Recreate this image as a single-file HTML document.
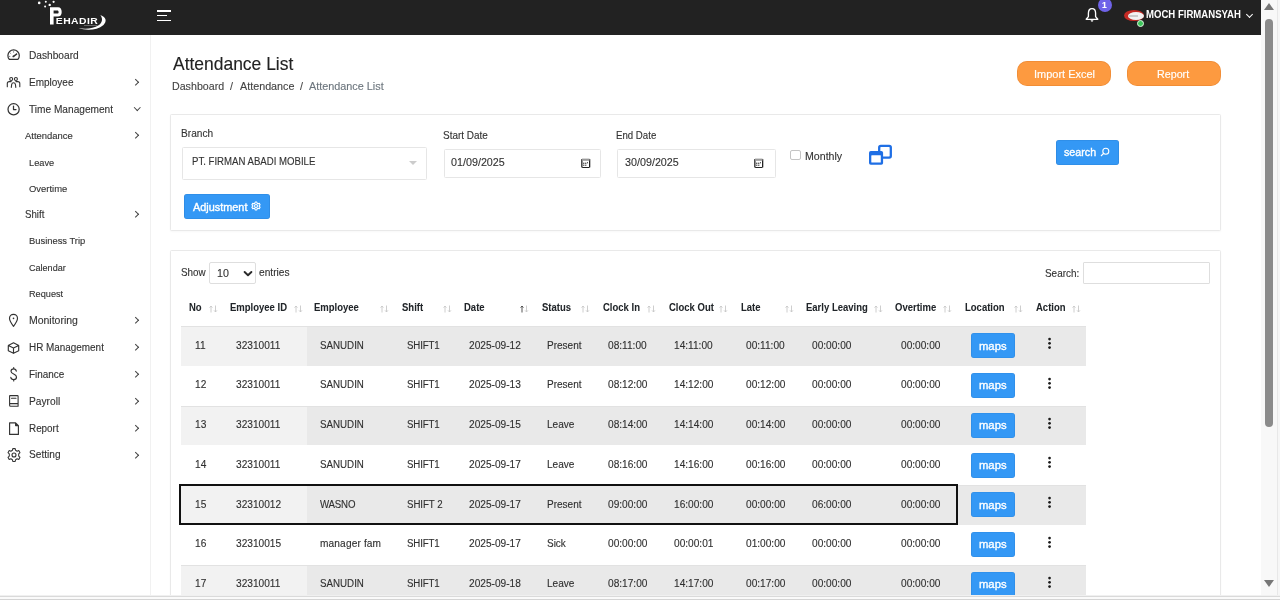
<!DOCTYPE html><html><head><meta charset="utf-8"><style>
*{box-sizing:border-box;margin:0;padding:0}
html,body{width:1280px;height:600px;overflow:hidden;background:#fff;font-family:"Liberation Sans",sans-serif;color:#333}
.abs{position:absolute}
.t{position:absolute;white-space:nowrap;will-change:transform;-webkit-text-stroke:0.12px currentColor}
.card{position:absolute;background:#fff;border:1px solid #e9e9e9;border-radius:1.5px;box-shadow:0 1px 2px rgba(0,0,0,.03)}
.inp{position:absolute;border:1px solid #e6e6e6;border-radius:1.5px;background:#fff}
.btn-o{position:absolute;background:#fd9a40;border-radius:10px;box-shadow:inset 0 0 0 0.7px rgba(210,110,30,.35)}
.btn-b{position:absolute;background:#3498f5;border-radius:3px;box-shadow:inset 0 0 0 0.6px rgba(20,80,150,.25)}
.row{position:absolute}
.maps{position:absolute;width:44px;height:25px;background:#3498f5;border-radius:3px;box-shadow:inset 0 0 0 0.6px rgba(20,80,150,.2)}
.keb{position:absolute;width:2.7px}
.keb i{display:block;width:2.7px;height:2.7px;border-radius:50%;background:#1a1a1a;margin-bottom:1.5px}
</style></head><body>
<div class="abs" style="left:0;top:0;width:1261px;height:35px;background:#222222"></div>
<svg class="abs" style="left:0;top:0;will-change:transform" width="120" height="35" viewBox="0 0 120 35">
<g fill="#fff">
<circle cx="39.2" cy="2.9" r="1.3"/><circle cx="45.8" cy="1.8" r="1.0"/><circle cx="53.6" cy="1.8" r="1.1"/><circle cx="45.1" cy="6.6" r="1.0"/><circle cx="49.7" cy="4.9" r="1.2"/>
</g>
<path d="M50 7.3 H58 C60.5 7.3 61.7 9.2 61.7 11.9 C61.7 14.8 60.3 16.5 57.8 16.5 H53.6 V24.6 H50 Z M53.6 10.4 V13.6 H57.5 C58.3 13.6 58.6 12.9 58.6 12 C58.6 11 58.2 10.4 57.4 10.4 Z" fill="#fff"/>
<text transform="translate(55.8 23.8) scale(1.25 1)" x="0" y="0" font-family="Liberation Sans" font-weight="bold" font-size="8.3" fill="#fff" letter-spacing="0.35">EHADIR</text>
<path d="M78.5 28.1 C86 30.8 97 30.5 103.5 25 C107 21.5 106.5 17.5 100.3 15.1 C103 18.5 102.5 22.5 99 25 C93 28.8 86 29.5 78.5 28.1 Z" fill="#fff"/>
<rect x="84" y="25" width="13.5" height="1" fill="#666"/>
</svg>
<div class="abs" style="left:156.8px;top:10.1px;width:14.2px;height:1.8px;background:#fff"></div>
<div class="abs" style="left:156.8px;top:15px;width:10px;height:1.3px;background:#fff"></div>
<div class="abs" style="left:156.8px;top:19.8px;width:14.2px;height:1.4px;background:#fff"></div>
<svg class="abs" style="left:1084px;top:7px" width="16" height="16" viewBox="0 0 16 16">
<path d="M8 1.6 C5.4 1.6 4.4 3.8 4.4 6.3 V9.6 L2.2 12.3 H13.8 L11.6 9.6 V6.3 C11.6 3.8 10.6 1.6 8 1.6z" fill="none" stroke="#fff" stroke-width="1.35" stroke-linejoin="round"/>
<path d="M6.6 13.3 a1.4 1.4 0 0 0 2.8 0z" fill="#fff"/></svg>
<div class="abs" style="left:1098px;top:-2px;width:14px;height:14px;border-radius:50%;background:#6f63e8"></div>
<div class="t" style="left:1102.49px;top:-4.90px;font-size:8.50px;line-height:20px;color:#fff;font-weight:bold;transform:scaleY(1.1);transform-origin:0 12.50px;">1</div>
<div class="abs" style="left:1123.7px;top:10px;width:20px;height:11px;border-radius:50%;background:#c42a24"></div>
<div class="abs" style="left:1127.5px;top:11.8px;width:16px;height:8px;border-radius:50%;background:#f2f2f2"></div>
<div class="abs" style="left:1129px;top:14.5px;width:9px;height:2px;background:#ccc"></div>
<div class="abs" style="left:1136.5px;top:20px;width:7px;height:7px;border-radius:50%;background:#3cc45a;border:1px solid #dff5e0"></div>
<div class="t" style="left:1146.18px;top:5.00px;font-size:9.58px;line-height:20px;color:#fff;font-weight:bold;transform:scaleY(1.08);transform-origin:0 13.00px;-webkit-text-stroke:0;">MOCH FIRMANSYAH</div>
<div class="abs" style="left:1246.5px;top:11.5px;width:5px;height:5px;border-right:1.3px solid #fff;border-bottom:1.3px solid #fff;transform:rotate(45deg)"></div>
<div class="abs" style="left:150px;top:35px;width:1px;height:561px;background:#f1f1f1"></div>
<div class="t" style="left:28.79px;top:45.70px;font-size:10.17px;line-height:20px;color:#333;transform:scaleY(1.05);transform-origin:0 13.00px;">Dashboard</div>
<div class="t" style="left:28.80px;top:73.00px;font-size:10.01px;line-height:20px;color:#333;transform:scaleY(1.05);transform-origin:0 13.00px;">Employee</div>
<div class="abs" style="left:132.5px;top:80.4px;width:4.5px;height:4.5px;border-right:1.3px solid #444;border-bottom:1.3px solid #444;transform:rotate(-45deg)"></div>
<div class="t" style="left:29.40px;top:99.70px;font-size:10.13px;line-height:20px;color:#333;transform:scaleY(1.05);transform-origin:0 13.00px;">Time Management</div>
<div class="abs" style="left:134.6px;top:105.2px;width:4.5px;height:4.5px;border-right:1.3px solid #444;border-bottom:1.3px solid #444;transform:rotate(45deg)"></div>
<div class="t" style="left:25.30px;top:126.00px;font-size:9.45px;line-height:20px;color:#333;transform:scaleY(1.05);transform-origin:0 13.00px;">Attendance</div>
<div class="abs" style="left:132.5px;top:133.4px;width:4.5px;height:4.5px;border-right:1.3px solid #444;border-bottom:1.3px solid #444;transform:rotate(-45deg)"></div>
<div class="t" style="left:28.56px;top:153.20px;font-size:9.23px;line-height:20px;color:#333;transform:scaleY(1.05);transform-origin:0 12.50px;">Leave</div>
<div class="t" style="left:28.88px;top:178.70px;font-size:9.43px;line-height:20px;color:#333;transform:scaleY(1.05);transform-origin:0 13.00px;">Overtime</div>
<div class="t" style="left:24.86px;top:205.00px;font-size:9.69px;line-height:20px;color:#333;transform:scaleY(1.05);transform-origin:0 13.00px;">Shift</div>
<div class="abs" style="left:132.5px;top:212.4px;width:4.5px;height:4.5px;border-right:1.3px solid #444;border-bottom:1.3px solid #444;transform:rotate(-45deg)"></div>
<div class="t" style="left:28.95px;top:231.20px;font-size:9.40px;line-height:20px;color:#333;transform:scaleY(1.05);transform-origin:0 13.00px;">Business Trip</div>
<div class="t" style="left:29.25px;top:257.50px;font-size:9.05px;line-height:20px;color:#333;transform:scaleY(1.05);transform-origin:0 12.50px;">Calendar</div>
<div class="t" style="left:28.97px;top:284.00px;font-size:9.16px;line-height:20px;color:#333;transform:scaleY(1.05);transform-origin:0 12.50px;">Request</div>
<div class="t" style="left:28.76px;top:310.90px;font-size:10.48px;line-height:20px;color:#333;transform:scaleY(1.05);transform-origin:0 13.00px;">Monitoring</div>
<div class="abs" style="left:132.5px;top:318.29999999999995px;width:4.5px;height:4.5px;border-right:1.3px solid #444;border-bottom:1.3px solid #444;transform:rotate(-45deg)"></div>
<div class="t" style="left:28.81px;top:337.70px;font-size:9.92px;line-height:20px;color:#333;transform:scaleY(1.05);transform-origin:0 13.00px;">HR Management</div>
<div class="abs" style="left:132.5px;top:345.09999999999997px;width:4.5px;height:4.5px;border-right:1.3px solid #444;border-bottom:1.3px solid #444;transform:rotate(-45deg)"></div>
<div class="t" style="left:28.80px;top:364.70px;font-size:9.94px;line-height:20px;color:#333;transform:scaleY(1.05);transform-origin:0 13.00px;">Finance</div>
<div class="abs" style="left:132.5px;top:372.09999999999997px;width:4.5px;height:4.5px;border-right:1.3px solid #444;border-bottom:1.3px solid #444;transform:rotate(-45deg)"></div>
<div class="t" style="left:28.78px;top:391.70px;font-size:10.21px;line-height:20px;color:#333;transform:scaleY(1.05);transform-origin:0 13.00px;">Payroll</div>
<div class="abs" style="left:132.5px;top:399.09999999999997px;width:4.5px;height:4.5px;border-right:1.3px solid #444;border-bottom:1.3px solid #444;transform:rotate(-45deg)"></div>
<div class="t" style="left:28.81px;top:418.70px;font-size:9.88px;line-height:20px;color:#333;transform:scaleY(1.05);transform-origin:0 13.00px;">Report</div>
<div class="abs" style="left:132.5px;top:426.09999999999997px;width:4.5px;height:4.5px;border-right:1.3px solid #444;border-bottom:1.3px solid #444;transform:rotate(-45deg)"></div>
<div class="t" style="left:29.14px;top:445.30px;font-size:10.13px;line-height:20px;color:#333;transform:scaleY(1.05);transform-origin:0 13.00px;">Setting</div>
<div class="abs" style="left:132.5px;top:452.7px;width:4.5px;height:4.5px;border-right:1.3px solid #444;border-bottom:1.3px solid #444;transform:rotate(-45deg)"></div>
<svg class="abs" style="left:0;top:0" width="30" height="470" viewBox="0 0 30 470" fill="none" stroke="#333" stroke-width="1.25" stroke-linecap="round" stroke-linejoin="round">
<path d="M9.3 59.4 A5.7 5.7 0 1 1 17.9 59.4 Z"/>
<path d="M13.5 56.3 L16.6 54.1" stroke-width="1.5"/><circle cx="13.4" cy="56.4" r="0.9" fill="#333" stroke="none"/>
<path d="M13.6 51.6 V52.3 M10.4 53.2 L10.9 53.7 M16.8 53.2 L16.3 53.7 M9.2 56.4 H9.9" stroke-width="0.8" stroke="#666"/>
<circle cx="11.2" cy="79" r="1.5" stroke-width="1.1"/><circle cx="15.9" cy="79" r="1.5" stroke-width="1.1"/>
<path d="M7.3 86.8 V83.6 Q7.3 81.6 9.3 81.6 H11.2 M19.8 86.8 V83.6 Q19.8 81.6 17.8 81.6 H15.9" stroke-width="1.1"/>
<path d="M11.3 87.4 L11.7 84.3 Q12 82.8 13.55 82.8 Q15.1 82.8 15.4 84.3 L15.8 87.4" stroke-width="1.1"/>
<circle cx="13.6" cy="109.3" r="5.6"/>
<path d="M13.5 106.1 V109.6 H16"/>
<path d="M13.5 326.3 C10.8 322.8 9.5 320.6 9.5 318.3 A4 4 0 0 1 17.5 318.3 C17.5 320.6 16.2 322.8 13.5 326.3 Z" stroke-width="1.15"/>
<circle cx="13.5" cy="318.4" r="0.8" fill="#333" stroke="none"/>
<path d="M13.5 342.8 L18.7 345.4 V350.8 L13.5 353.3 L8.3 350.8 V345.4 Z M8.3 345.4 L13.5 348 L18.7 345.4 M13.5 348 V353.3" stroke-width="1.15"/>
<path d="M16.3 371.2 C16 369.6 15 368.9 13.7 368.9 C12.1 368.9 11 369.9 11 371.3 C11 374.6 16.5 373.4 16.5 377 C16.5 378.7 15.2 379.6 13.7 379.6 C12.1 379.6 11 378.6 10.8 377.3 M13.7 367.6 V368.9 M13.7 379.6 V381" stroke-width="1.15"/>
<path d="M10 395.6 H17.4 Q18.1 395.6 18.1 396.3 V406.2 H10.6 Q9.6 406.2 9.6 405.2 V396 Q9.6 395.6 10 395.6 Z M9.6 403.6 H18.1 M11.5 398.2 H16" stroke-width="1.1"/>
<path d="M9.6 422.8 H15.6 L18.4 425.6 V434.4 H9.6 Z M15.6 422.8 V425.6 H18.4" stroke-width="1.15"/>
<circle cx="14" cy="455" r="2" stroke-width="1.1"/>
<path d="M12.8 448.6 H15.2 L15.6 450.3 L17.1 451.2 L18.8 450.6 L20 452.7 L18.7 453.9 V456.1 L20 457.3 L18.8 459.4 L17.1 458.8 L15.6 459.7 L15.2 461.4 H12.8 L12.4 459.7 L10.9 458.8 L9.2 459.4 L8 457.3 L9.3 456.1 V453.9 L8 452.7 L9.2 450.6 L10.9 451.2 L12.4 450.3 Z" stroke-width="1.05"/>
</svg>
<div class="t" style="left:172.70px;top:54.10px;font-size:17.47px;line-height:20px;color:#222;transform:scaleY(1.05);transform-origin:0 15.50px;">Attendance List</div>
<div class="t" style="left:171.90px;top:76.20px;font-size:10.67px;line-height:20px;color:#444;transform:scaleY(1.05);transform-origin:0 13.50px;">Dashboard</div>
<div class="t" style="left:229.75px;top:76.20px;font-size:10.80px;line-height:20px;color:#444;transform:scaleY(1.05);transform-origin:0 13.50px;">/</div>
<div class="t" style="left:239.70px;top:76.20px;font-size:10.77px;line-height:20px;color:#444;transform:scaleY(1.05);transform-origin:0 13.50px;">Attendance</div>
<div class="t" style="left:300.25px;top:76.20px;font-size:10.80px;line-height:20px;color:#444;transform:scaleY(1.05);transform-origin:0 13.50px;">/</div>
<div class="t" style="left:309.40px;top:76.20px;font-size:10.84px;line-height:20px;color:#6c757d;transform:scaleY(1.05);transform-origin:0 13.50px;">Attendance List</div>
<div class="btn-o" style="left:1017px;top:61px;width:94px;height:25px"></div>
<div class="btn-o" style="left:1127px;top:61px;width:94px;height:25px"></div>
<div class="t" style="left:1033.61px;top:63.50px;font-size:10.98px;line-height:20px;color:#fff;transform:scaleY(1.05);transform-origin:0 13.50px;-webkit-text-stroke:0.15px #fff;">Import Excel</div>
<div class="t" style="left:1157.39px;top:63.50px;font-size:10.72px;line-height:20px;color:#fff;transform:scaleY(1.05);transform-origin:0 13.50px;-webkit-text-stroke:0.15px #fff;">Report</div>
<div class="card" style="left:170px;top:114px;width:1051px;height:117px"></div>
<div class="t" style="left:180.89px;top:123.70px;font-size:10.13px;line-height:20px;color:#333;transform:scaleY(1.05);transform-origin:0 13.00px;">Branch</div>
<div class="inp" style="left:181.5px;top:147px;width:245px;height:32.5px"></div>
<div class="t" style="left:191.83px;top:152.30px;font-size:9.62px;line-height:20px;color:#333;transform:scaleY(1.05);transform-origin:0 13.00px;">PT. FIRMAN ABADI MOBILE</div>
<div class="abs" style="left:408.5px;top:161px;width:0;height:0;border-left:4px solid transparent;border-right:4px solid transparent;border-top:4px solid #ccc"></div>
<div class="t" style="left:442.55px;top:125.50px;font-size:9.98px;line-height:20px;color:#333;transform:scaleY(1.05);transform-origin:0 13.00px;">Start Date</div>
<div class="inp" style="left:443.5px;top:149px;width:157px;height:28.5px"></div>
<div class="t" style="left:451.37px;top:152.30px;font-size:10.76px;line-height:20px;color:#333;transform:scaleY(1.05);transform-origin:0 13.50px;">01/09/2025</div>
<div class="abs" style="left:580.8px;top:157.8px;line-height:0"><svg width="12" height="12" viewBox="0 0 12 12"><g fill="#222"><rect x="0.2" y="1.0" width="1.3" height="8.6" rx="0.6"/><rect x="8.0" y="1.0" width="1.3" height="8.6" rx="0.6"/><rect x="1" y="9.0" width="7.5" height="0.9" rx="0.4"/><rect x="2.3" y="4.6" width="1" height="1.4"/><rect x="4.3" y="4.6" width="1" height="1.4"/><rect x="6.1" y="4.2" width="0.9" height="1.1"/><rect x="2.3" y="6.6" width="1" height="1.3"/><rect x="4.3" y="6.6" width="1" height="1.3"/></g><rect x="1" y="0.6" width="7.5" height="2.2" fill="#9a9a9a"/></svg></div>
<div class="t" style="left:616.33px;top:125.60px;font-size:9.67px;line-height:20px;color:#333;transform:scaleY(1.05);transform-origin:0 13.00px;">End Date</div>
<div class="inp" style="left:616.6px;top:149px;width:159px;height:28.5px"></div>
<div class="t" style="left:625.47px;top:152.20px;font-size:10.76px;line-height:20px;color:#333;transform:scaleY(1.05);transform-origin:0 13.50px;">30/09/2025</div>
<div class="abs" style="left:754.3px;top:157.8px;line-height:0"><svg width="12" height="12" viewBox="0 0 12 12"><g fill="#222"><rect x="0.2" y="1.0" width="1.3" height="8.6" rx="0.6"/><rect x="8.0" y="1.0" width="1.3" height="8.6" rx="0.6"/><rect x="1" y="9.0" width="7.5" height="0.9" rx="0.4"/><rect x="2.3" y="4.6" width="1" height="1.4"/><rect x="4.3" y="4.6" width="1" height="1.4"/><rect x="6.1" y="4.2" width="0.9" height="1.1"/><rect x="2.3" y="6.6" width="1" height="1.3"/><rect x="4.3" y="6.6" width="1" height="1.3"/></g><rect x="1" y="0.6" width="7.5" height="2.2" fill="#9a9a9a"/></svg></div>
<div class="abs" style="left:790.2px;top:150px;width:10.5px;height:10px;border:1px solid #c4c4c4;border-radius:2px;background:#fff"></div>
<div class="t" style="left:804.75px;top:145.50px;font-size:10.61px;line-height:20px;color:#333;transform:scaleY(1.05);transform-origin:0 13.50px;">Monthly</div>
<svg class="abs" style="left:866px;top:142px" width="30" height="26" viewBox="866 142 30 26"><rect x="879.2" y="145.9" width="11.6" height="11.7" rx="1.6" fill="none" stroke="#1f6fe5" stroke-width="2.3"/><rect x="869" y="151" width="14.1" height="13.75" rx="1.8" fill="#1f6fe5"/><rect x="871.3" y="155.2" width="9.5" height="7.3" rx="0.5" fill="#fff"/></svg>
<div class="btn-b" style="left:1056px;top:140px;width:63px;height:25px"></div>
<div class="t" style="left:1064.43px;top:142.15px;font-size:10.71px;line-height:20px;color:#fff;transform:scaleY(1.05);transform-origin:0 13.50px;-webkit-text-stroke:0.35px #fff;">search</div>
<svg class="abs" style="left:1100px;top:147px" width="10" height="10" viewBox="0 0 10 10"><circle cx="5.8" cy="4.2" r="3" fill="none" stroke="#fff" stroke-width="1.1"/><path d="M3.6 6.4 L1 9" stroke="#fff" stroke-width="1.2"/></svg>
<div class="btn-b" style="left:184px;top:194px;width:86px;height:25px"></div>
<div class="t" style="left:193.20px;top:196.60px;font-size:10.89px;line-height:20px;color:#fff;transform:scaleY(1.05);transform-origin:0 13.50px;-webkit-text-stroke:0.35px #fff;">Adjustment</div>
<svg class="abs" style="left:251px;top:201px" width="10" height="10" viewBox="0 0 15 15"><circle cx="7.5" cy="7.5" r="2.2" fill="none" stroke="#fff" stroke-width="1.7"/><path d="M6.3 1.5 H8.7 L9.1 3.3 L10.7 4.2 L12.4 3.6 L13.6 5.7 L12.3 6.9 V8.1 L13.6 9.3 L12.4 11.4 L10.7 10.8 L9.1 11.7 L8.7 13.5 H6.3 L5.9 11.7 L4.3 10.8 L2.6 11.4 L1.4 9.3 L2.7 8.1 V6.9 L1.4 5.7 L2.6 3.6 L4.3 4.2 L5.9 3.3 Z" fill="none" stroke="#fff" stroke-width="1.7" stroke-linejoin="round"/></svg>
<div class="card" style="left:170px;top:250px;width:1051px;height:400px"></div>
<div class="t" style="left:181.16px;top:263.30px;font-size:9.84px;line-height:20px;color:#333;transform:scaleY(1.05);transform-origin:0 13.00px;">Show</div>
<div class="inp" style="left:209.2px;top:262.3px;width:47.3px;height:21.5px;border-color:#dedede;border-radius:2px"></div>
<div class="t" style="left:217.20px;top:262.50px;font-size:10.70px;line-height:20px;color:#333;transform:scaleY(1.05);transform-origin:0 13.50px;">10</div>
<svg class="abs" style="left:240px;top:266px" width="16" height="14" viewBox="240 266 16 14"><path d="M244.6 272 L248 275.3 L251.4 272" fill="none" stroke="#2a2a2a" stroke-width="1.9" stroke-linecap="round" stroke-linejoin="round"/></svg>
<div class="t" style="left:258.79px;top:263.30px;font-size:10.19px;line-height:20px;color:#333;transform:scaleY(1.05);transform-origin:0 13.00px;">entries</div>
<div class="t" style="left:1044.85px;top:264.00px;font-size:9.94px;line-height:20px;color:#333;transform:scaleY(1.05);transform-origin:0 13.00px;">Search:</div>
<div class="inp" style="left:1083.1px;top:262.1px;width:126.8px;height:21.5px;border-color:#dedede;border-radius:1px"></div>
<div class="t" style="left:189.38px;top:297.50px;font-size:9.50px;line-height:20px;color:#212529;font-weight:bold;transform:scaleY(1.1);transform-origin:0 13.00px;-webkit-text-stroke:0.05px #212529;">No</div>
<svg class="abs" style="left:208.7px;top:305px" width="9" height="8" viewBox="0 0 9 8"><path d="M2 7.5 V1 M0.6 2.6 L2 1 L3.4 2.6" fill="none" stroke="#c8c8c8" stroke-width="0.9"/><path d="M6.5 0.5 V7 M5.1 5.4 L6.5 7 L7.9 5.4" fill="none" stroke="#c8c8c8" stroke-width="0.9"/></svg>
<div class="t" style="left:230.38px;top:297.50px;font-size:9.50px;line-height:20px;color:#212529;font-weight:bold;transform:scaleY(1.1);transform-origin:0 13.00px;-webkit-text-stroke:0.05px #212529;">Employee ID</div>
<svg class="abs" style="left:293.7px;top:305px" width="9" height="8" viewBox="0 0 9 8"><path d="M2 7.5 V1 M0.6 2.6 L2 1 L3.4 2.6" fill="none" stroke="#c8c8c8" stroke-width="0.9"/><path d="M6.5 0.5 V7 M5.1 5.4 L6.5 7 L7.9 5.4" fill="none" stroke="#c8c8c8" stroke-width="0.9"/></svg>
<div class="t" style="left:314.48px;top:297.50px;font-size:9.50px;line-height:20px;color:#212529;font-weight:bold;transform:scaleY(1.1);transform-origin:0 13.00px;-webkit-text-stroke:0.05px #212529;">Employee</div>
<svg class="abs" style="left:380px;top:305px" width="9" height="8" viewBox="0 0 9 8"><path d="M2 7.5 V1 M0.6 2.6 L2 1 L3.4 2.6" fill="none" stroke="#c8c8c8" stroke-width="0.9"/><path d="M6.5 0.5 V7 M5.1 5.4 L6.5 7 L7.9 5.4" fill="none" stroke="#c8c8c8" stroke-width="0.9"/></svg>
<div class="t" style="left:401.71px;top:297.50px;font-size:9.50px;line-height:20px;color:#212529;font-weight:bold;transform:scaleY(1.1);transform-origin:0 13.00px;-webkit-text-stroke:0.05px #212529;">Shift</div>
<svg class="abs" style="left:442.6px;top:305px" width="9" height="8" viewBox="0 0 9 8"><path d="M2 7.5 V1 M0.6 2.6 L2 1 L3.4 2.6" fill="none" stroke="#c8c8c8" stroke-width="0.9"/><path d="M6.5 0.5 V7 M5.1 5.4 L6.5 7 L7.9 5.4" fill="none" stroke="#c8c8c8" stroke-width="0.9"/></svg>
<div class="t" style="left:464.38px;top:297.50px;font-size:9.50px;line-height:20px;color:#212529;font-weight:bold;transform:scaleY(1.1);transform-origin:0 13.00px;-webkit-text-stroke:0.05px #212529;">Date</div>
<svg class="abs" style="left:520px;top:305px" width="9" height="8" viewBox="0 0 9 8"><path d="M2 7.5 V1 M0.6 2.6 L2 1 L3.4 2.6" fill="none" stroke="#444" stroke-width="0.9"/><path d="M6.5 0.5 V7 M5.1 5.4 L6.5 7 L7.9 5.4" fill="none" stroke="#c8c8c8" stroke-width="0.9"/></svg>
<div class="t" style="left:542.22px;top:297.50px;font-size:9.50px;line-height:20px;color:#212529;font-weight:bold;transform:scaleY(1.1);transform-origin:0 13.00px;-webkit-text-stroke:0.05px #212529;">Status</div>
<svg class="abs" style="left:581.25px;top:305px" width="9" height="8" viewBox="0 0 9 8"><path d="M2 7.5 V1 M0.6 2.6 L2 1 L3.4 2.6" fill="none" stroke="#c8c8c8" stroke-width="0.9"/><path d="M6.5 0.5 V7 M5.1 5.4 L6.5 7 L7.9 5.4" fill="none" stroke="#c8c8c8" stroke-width="0.9"/></svg>
<div class="t" style="left:603.02px;top:297.50px;font-size:9.50px;line-height:20px;color:#212529;font-weight:bold;transform:scaleY(1.1);transform-origin:0 13.00px;-webkit-text-stroke:0.05px #212529;">Clock In</div>
<svg class="abs" style="left:647px;top:305px" width="9" height="8" viewBox="0 0 9 8"><path d="M2 7.5 V1 M0.6 2.6 L2 1 L3.4 2.6" fill="none" stroke="#c8c8c8" stroke-width="0.9"/><path d="M6.5 0.5 V7 M5.1 5.4 L6.5 7 L7.9 5.4" fill="none" stroke="#c8c8c8" stroke-width="0.9"/></svg>
<div class="t" style="left:669.12px;top:297.50px;font-size:9.50px;line-height:20px;color:#212529;font-weight:bold;transform:scaleY(1.1);transform-origin:0 13.00px;-webkit-text-stroke:0.05px #212529;">Clock Out</div>
<svg class="abs" style="left:719.3px;top:305px" width="9" height="8" viewBox="0 0 9 8"><path d="M2 7.5 V1 M0.6 2.6 L2 1 L3.4 2.6" fill="none" stroke="#c8c8c8" stroke-width="0.9"/><path d="M6.5 0.5 V7 M5.1 5.4 L6.5 7 L7.9 5.4" fill="none" stroke="#c8c8c8" stroke-width="0.9"/></svg>
<div class="t" style="left:741.08px;top:297.50px;font-size:9.50px;line-height:20px;color:#212529;font-weight:bold;transform:scaleY(1.1);transform-origin:0 13.00px;-webkit-text-stroke:0.05px #212529;">Late</div>
<svg class="abs" style="left:784.8px;top:305px" width="9" height="8" viewBox="0 0 9 8"><path d="M2 7.5 V1 M0.6 2.6 L2 1 L3.4 2.6" fill="none" stroke="#c8c8c8" stroke-width="0.9"/><path d="M6.5 0.5 V7 M5.1 5.4 L6.5 7 L7.9 5.4" fill="none" stroke="#c8c8c8" stroke-width="0.9"/></svg>
<div class="t" style="left:806.38px;top:297.50px;font-size:9.50px;line-height:20px;color:#212529;font-weight:bold;transform:scaleY(1.1);transform-origin:0 13.00px;-webkit-text-stroke:0.05px #212529;">Early Leaving</div>
<svg class="abs" style="left:873.5px;top:305px" width="9" height="8" viewBox="0 0 9 8"><path d="M2 7.5 V1 M0.6 2.6 L2 1 L3.4 2.6" fill="none" stroke="#c8c8c8" stroke-width="0.9"/><path d="M6.5 0.5 V7 M5.1 5.4 L6.5 7 L7.9 5.4" fill="none" stroke="#c8c8c8" stroke-width="0.9"/></svg>
<div class="t" style="left:895.42px;top:297.50px;font-size:9.50px;line-height:20px;color:#212529;font-weight:bold;transform:scaleY(1.1);transform-origin:0 13.00px;-webkit-text-stroke:0.05px #212529;">Overtime</div>
<svg class="abs" style="left:943.2px;top:305px" width="9" height="8" viewBox="0 0 9 8"><path d="M2 7.5 V1 M0.6 2.6 L2 1 L3.4 2.6" fill="none" stroke="#c8c8c8" stroke-width="0.9"/><path d="M6.5 0.5 V7 M5.1 5.4 L6.5 7 L7.9 5.4" fill="none" stroke="#c8c8c8" stroke-width="0.9"/></svg>
<div class="t" style="left:964.88px;top:297.50px;font-size:9.50px;line-height:20px;color:#212529;font-weight:bold;transform:scaleY(1.1);transform-origin:0 13.00px;-webkit-text-stroke:0.05px #212529;">Location</div>
<svg class="abs" style="left:1014.2px;top:305px" width="9" height="8" viewBox="0 0 9 8"><path d="M2 7.5 V1 M0.6 2.6 L2 1 L3.4 2.6" fill="none" stroke="#c8c8c8" stroke-width="0.9"/><path d="M6.5 0.5 V7 M5.1 5.4 L6.5 7 L7.9 5.4" fill="none" stroke="#c8c8c8" stroke-width="0.9"/></svg>
<div class="t" style="left:1036.06px;top:297.50px;font-size:9.50px;line-height:20px;color:#212529;font-weight:bold;transform:scaleY(1.1);transform-origin:0 13.00px;-webkit-text-stroke:0.05px #212529;">Action</div>
<svg class="abs" style="left:1072px;top:305px" width="9" height="8" viewBox="0 0 9 8"><path d="M2 7.5 V1 M0.6 2.6 L2 1 L3.4 2.6" fill="none" stroke="#c8c8c8" stroke-width="0.9"/><path d="M6.5 0.5 V7 M5.1 5.4 L6.5 7 L7.9 5.4" fill="none" stroke="#c8c8c8" stroke-width="0.9"/></svg>
<div class="row" style="left:181px;top:326.00px;width:905px;height:39.75px;background:#e9e9e9"></div>
<div class="row" style="left:181px;top:326.00px;width:126px;height:39.75px;background:#f2f2f2"></div>
<div class="row" style="left:181px;top:326.00px;width:905px;height:1px;background:#e2e2e2"></div>
<div class="t" style="left:194.94px;top:335.70px;font-size:10.15px;line-height:20px;color:#303030;transform:scaleY(1.05);transform-origin:0 13.00px;">11</div>
<div class="t" style="left:235.59px;top:335.70px;font-size:10.15px;line-height:20px;color:#303030;transform:scaleY(1.05);transform-origin:0 13.00px;">32310011</div>
<div class="t" style="left:319.96px;top:335.70px;font-size:9.76px;line-height:20px;color:#303030;letter-spacing:0.00px;transform:scaleY(1.05);transform-origin:0 13.00px;">SANUDIN</div>
<div class="t" style="left:406.86px;top:335.70px;font-size:9.70px;line-height:20px;color:#303030;letter-spacing:-0.13px;transform:scaleY(1.05);transform-origin:0 13.00px;">SHIFT1</div>
<div class="t" style="left:469.49px;top:335.70px;font-size:10.15px;line-height:20px;color:#303030;transform:scaleY(1.05);transform-origin:0 13.00px;">2025-09-12</div>
<div class="t" style="left:546.80px;top:335.70px;font-size:10.03px;line-height:20px;color:#303030;transform:scaleY(1.05);transform-origin:0 13.00px;">Present</div>
<div class="t" style="left:608.29px;top:335.70px;font-size:10.15px;line-height:20px;color:#303030;transform:scaleY(1.05);transform-origin:0 13.00px;">08:11:00</div>
<div class="t" style="left:674.14px;top:335.70px;font-size:10.15px;line-height:20px;color:#303030;transform:scaleY(1.05);transform-origin:0 13.00px;">14:11:00</div>
<div class="t" style="left:746.29px;top:335.70px;font-size:10.15px;line-height:20px;color:#303030;transform:scaleY(1.05);transform-origin:0 13.00px;">00:11:00</div>
<div class="t" style="left:812.09px;top:335.70px;font-size:10.15px;line-height:20px;color:#303030;transform:scaleY(1.05);transform-origin:0 13.00px;">00:00:00</div>
<div class="t" style="left:900.79px;top:335.70px;font-size:10.15px;line-height:20px;color:#303030;transform:scaleY(1.05);transform-origin:0 13.00px;">00:00:00</div>
<div class="maps" style="left:970.7px;top:333.30px"></div>
<div class="t" style="left:979.07px;top:335.70px;font-size:11.26px;line-height:20px;color:#fff;-webkit-text-stroke:0.35px #fff;">maps</div>
<svg class="abs" style="left:1046px;top:336.00px" width="8" height="16" viewBox="0 0 8 16"><g fill="#1a1a1a"><circle cx="3.55" cy="3.05" r="1.35"/><circle cx="3.55" cy="7.3" r="1.35"/><circle cx="3.55" cy="11.55" r="1.35"/></g></svg>
<div class="t" style="left:194.94px;top:375.45px;font-size:10.15px;line-height:20px;color:#303030;transform:scaleY(1.05);transform-origin:0 13.00px;">12</div>
<div class="t" style="left:235.59px;top:375.45px;font-size:10.15px;line-height:20px;color:#303030;transform:scaleY(1.05);transform-origin:0 13.00px;">32310011</div>
<div class="t" style="left:319.96px;top:375.45px;font-size:9.76px;line-height:20px;color:#303030;letter-spacing:0.00px;transform:scaleY(1.05);transform-origin:0 13.00px;">SANUDIN</div>
<div class="t" style="left:406.86px;top:375.45px;font-size:9.70px;line-height:20px;color:#303030;letter-spacing:-0.13px;transform:scaleY(1.05);transform-origin:0 13.00px;">SHIFT1</div>
<div class="t" style="left:469.49px;top:375.45px;font-size:10.15px;line-height:20px;color:#303030;transform:scaleY(1.05);transform-origin:0 13.00px;">2025-09-13</div>
<div class="t" style="left:546.80px;top:375.45px;font-size:10.03px;line-height:20px;color:#303030;transform:scaleY(1.05);transform-origin:0 13.00px;">Present</div>
<div class="t" style="left:608.29px;top:375.45px;font-size:10.15px;line-height:20px;color:#303030;transform:scaleY(1.05);transform-origin:0 13.00px;">08:12:00</div>
<div class="t" style="left:674.14px;top:375.45px;font-size:10.15px;line-height:20px;color:#303030;transform:scaleY(1.05);transform-origin:0 13.00px;">14:12:00</div>
<div class="t" style="left:746.29px;top:375.45px;font-size:10.15px;line-height:20px;color:#303030;transform:scaleY(1.05);transform-origin:0 13.00px;">00:12:00</div>
<div class="t" style="left:812.09px;top:375.45px;font-size:10.15px;line-height:20px;color:#303030;transform:scaleY(1.05);transform-origin:0 13.00px;">00:00:00</div>
<div class="t" style="left:900.79px;top:375.45px;font-size:10.15px;line-height:20px;color:#303030;transform:scaleY(1.05);transform-origin:0 13.00px;">00:00:00</div>
<div class="maps" style="left:970.7px;top:373.05px"></div>
<div class="t" style="left:979.07px;top:375.45px;font-size:11.26px;line-height:20px;color:#fff;-webkit-text-stroke:0.35px #fff;">maps</div>
<svg class="abs" style="left:1046px;top:375.75px" width="8" height="16" viewBox="0 0 8 16"><g fill="#1a1a1a"><circle cx="3.55" cy="3.05" r="1.35"/><circle cx="3.55" cy="7.3" r="1.35"/><circle cx="3.55" cy="11.55" r="1.35"/></g></svg>
<div class="row" style="left:181px;top:405.50px;width:905px;height:39.75px;background:#e9e9e9"></div>
<div class="row" style="left:181px;top:405.50px;width:126px;height:39.75px;background:#f2f2f2"></div>
<div class="row" style="left:181px;top:405.50px;width:905px;height:1px;background:#e2e2e2"></div>
<div class="t" style="left:194.94px;top:415.20px;font-size:10.15px;line-height:20px;color:#303030;transform:scaleY(1.05);transform-origin:0 13.00px;">13</div>
<div class="t" style="left:235.59px;top:415.20px;font-size:10.15px;line-height:20px;color:#303030;transform:scaleY(1.05);transform-origin:0 13.00px;">32310011</div>
<div class="t" style="left:319.96px;top:415.20px;font-size:9.76px;line-height:20px;color:#303030;letter-spacing:0.00px;transform:scaleY(1.05);transform-origin:0 13.00px;">SANUDIN</div>
<div class="t" style="left:406.86px;top:415.20px;font-size:9.70px;line-height:20px;color:#303030;letter-spacing:-0.13px;transform:scaleY(1.05);transform-origin:0 13.00px;">SHIFT1</div>
<div class="t" style="left:469.49px;top:415.20px;font-size:10.15px;line-height:20px;color:#303030;transform:scaleY(1.05);transform-origin:0 13.00px;">2025-09-15</div>
<div class="t" style="left:546.79px;top:415.20px;font-size:10.08px;line-height:20px;color:#303030;transform:scaleY(1.05);transform-origin:0 13.00px;">Leave</div>
<div class="t" style="left:608.29px;top:415.20px;font-size:10.15px;line-height:20px;color:#303030;transform:scaleY(1.05);transform-origin:0 13.00px;">08:14:00</div>
<div class="t" style="left:674.14px;top:415.20px;font-size:10.15px;line-height:20px;color:#303030;transform:scaleY(1.05);transform-origin:0 13.00px;">14:14:00</div>
<div class="t" style="left:746.29px;top:415.20px;font-size:10.15px;line-height:20px;color:#303030;transform:scaleY(1.05);transform-origin:0 13.00px;">00:14:00</div>
<div class="t" style="left:812.09px;top:415.20px;font-size:10.15px;line-height:20px;color:#303030;transform:scaleY(1.05);transform-origin:0 13.00px;">00:00:00</div>
<div class="t" style="left:900.79px;top:415.20px;font-size:10.15px;line-height:20px;color:#303030;transform:scaleY(1.05);transform-origin:0 13.00px;">00:00:00</div>
<div class="maps" style="left:970.7px;top:412.80px"></div>
<div class="t" style="left:979.07px;top:415.20px;font-size:11.26px;line-height:20px;color:#fff;-webkit-text-stroke:0.35px #fff;">maps</div>
<svg class="abs" style="left:1046px;top:415.50px" width="8" height="16" viewBox="0 0 8 16"><g fill="#1a1a1a"><circle cx="3.55" cy="3.05" r="1.35"/><circle cx="3.55" cy="7.3" r="1.35"/><circle cx="3.55" cy="11.55" r="1.35"/></g></svg>
<div class="t" style="left:194.94px;top:454.95px;font-size:10.15px;line-height:20px;color:#303030;transform:scaleY(1.05);transform-origin:0 13.00px;">14</div>
<div class="t" style="left:235.59px;top:454.95px;font-size:10.15px;line-height:20px;color:#303030;transform:scaleY(1.05);transform-origin:0 13.00px;">32310011</div>
<div class="t" style="left:319.96px;top:454.95px;font-size:9.76px;line-height:20px;color:#303030;letter-spacing:0.00px;transform:scaleY(1.05);transform-origin:0 13.00px;">SANUDIN</div>
<div class="t" style="left:406.86px;top:454.95px;font-size:9.70px;line-height:20px;color:#303030;letter-spacing:-0.13px;transform:scaleY(1.05);transform-origin:0 13.00px;">SHIFT1</div>
<div class="t" style="left:469.49px;top:454.95px;font-size:10.15px;line-height:20px;color:#303030;transform:scaleY(1.05);transform-origin:0 13.00px;">2025-09-17</div>
<div class="t" style="left:546.79px;top:454.95px;font-size:10.08px;line-height:20px;color:#303030;transform:scaleY(1.05);transform-origin:0 13.00px;">Leave</div>
<div class="t" style="left:608.29px;top:454.95px;font-size:10.15px;line-height:20px;color:#303030;transform:scaleY(1.05);transform-origin:0 13.00px;">08:16:00</div>
<div class="t" style="left:674.14px;top:454.95px;font-size:10.15px;line-height:20px;color:#303030;transform:scaleY(1.05);transform-origin:0 13.00px;">14:16:00</div>
<div class="t" style="left:746.29px;top:454.95px;font-size:10.15px;line-height:20px;color:#303030;transform:scaleY(1.05);transform-origin:0 13.00px;">00:16:00</div>
<div class="t" style="left:812.09px;top:454.95px;font-size:10.15px;line-height:20px;color:#303030;transform:scaleY(1.05);transform-origin:0 13.00px;">00:00:00</div>
<div class="t" style="left:900.79px;top:454.95px;font-size:10.15px;line-height:20px;color:#303030;transform:scaleY(1.05);transform-origin:0 13.00px;">00:00:00</div>
<div class="maps" style="left:970.7px;top:452.55px"></div>
<div class="t" style="left:979.07px;top:454.95px;font-size:11.26px;line-height:20px;color:#fff;-webkit-text-stroke:0.35px #fff;">maps</div>
<svg class="abs" style="left:1046px;top:455.25px" width="8" height="16" viewBox="0 0 8 16"><g fill="#1a1a1a"><circle cx="3.55" cy="3.05" r="1.35"/><circle cx="3.55" cy="7.3" r="1.35"/><circle cx="3.55" cy="11.55" r="1.35"/></g></svg>
<div class="row" style="left:181px;top:485.00px;width:905px;height:39.75px;background:#e9e9e9"></div>
<div class="row" style="left:181px;top:485.00px;width:126px;height:39.75px;background:#f2f2f2"></div>
<div class="row" style="left:181px;top:485.00px;width:905px;height:1px;background:#e2e2e2"></div>
<div class="t" style="left:194.94px;top:494.70px;font-size:10.15px;line-height:20px;color:#303030;transform:scaleY(1.05);transform-origin:0 13.00px;">15</div>
<div class="t" style="left:235.59px;top:494.70px;font-size:10.15px;line-height:20px;color:#303030;transform:scaleY(1.05);transform-origin:0 13.00px;">32310012</div>
<div class="t" style="left:320.35px;top:494.70px;font-size:9.70px;line-height:20px;color:#303030;letter-spacing:-0.20px;transform:scaleY(1.05);transform-origin:0 13.00px;">WASNO</div>
<div class="t" style="left:406.86px;top:494.70px;font-size:9.70px;line-height:20px;color:#303030;letter-spacing:-0.05px;transform:scaleY(1.05);transform-origin:0 13.00px;">SHIFT 2</div>
<div class="t" style="left:469.49px;top:494.70px;font-size:10.15px;line-height:20px;color:#303030;transform:scaleY(1.05);transform-origin:0 13.00px;">2025-09-17</div>
<div class="t" style="left:546.80px;top:494.70px;font-size:10.03px;line-height:20px;color:#303030;transform:scaleY(1.05);transform-origin:0 13.00px;">Present</div>
<div class="t" style="left:608.29px;top:494.70px;font-size:10.15px;line-height:20px;color:#303030;transform:scaleY(1.05);transform-origin:0 13.00px;">09:00:00</div>
<div class="t" style="left:674.14px;top:494.70px;font-size:10.15px;line-height:20px;color:#303030;transform:scaleY(1.05);transform-origin:0 13.00px;">16:00:00</div>
<div class="t" style="left:746.29px;top:494.70px;font-size:10.15px;line-height:20px;color:#303030;transform:scaleY(1.05);transform-origin:0 13.00px;">00:00:00</div>
<div class="t" style="left:812.09px;top:494.70px;font-size:10.15px;line-height:20px;color:#303030;transform:scaleY(1.05);transform-origin:0 13.00px;">06:00:00</div>
<div class="t" style="left:900.79px;top:494.70px;font-size:10.15px;line-height:20px;color:#303030;transform:scaleY(1.05);transform-origin:0 13.00px;">00:00:00</div>
<div class="maps" style="left:970.7px;top:492.30px"></div>
<div class="t" style="left:979.07px;top:494.70px;font-size:11.26px;line-height:20px;color:#fff;-webkit-text-stroke:0.35px #fff;">maps</div>
<svg class="abs" style="left:1046px;top:495.00px" width="8" height="16" viewBox="0 0 8 16"><g fill="#1a1a1a"><circle cx="3.55" cy="3.05" r="1.35"/><circle cx="3.55" cy="7.3" r="1.35"/><circle cx="3.55" cy="11.55" r="1.35"/></g></svg>
<div class="t" style="left:194.94px;top:534.45px;font-size:10.15px;line-height:20px;color:#303030;transform:scaleY(1.05);transform-origin:0 13.00px;">16</div>
<div class="t" style="left:235.59px;top:534.45px;font-size:10.15px;line-height:20px;color:#303030;transform:scaleY(1.05);transform-origin:0 13.00px;">32310015</div>
<div class="t" style="left:319.74px;top:534.45px;font-size:10.15px;line-height:20px;color:#303030;letter-spacing:0.14px;transform:scaleY(1.05);transform-origin:0 13.00px;">manager fam</div>
<div class="t" style="left:406.86px;top:534.45px;font-size:9.70px;line-height:20px;color:#303030;letter-spacing:-0.13px;transform:scaleY(1.05);transform-origin:0 13.00px;">SHIFT1</div>
<div class="t" style="left:469.49px;top:534.45px;font-size:10.15px;line-height:20px;color:#303030;transform:scaleY(1.05);transform-origin:0 13.00px;">2025-09-17</div>
<div class="t" style="left:547.15px;top:534.45px;font-size:9.97px;line-height:20px;color:#303030;transform:scaleY(1.05);transform-origin:0 13.00px;">Sick</div>
<div class="t" style="left:608.29px;top:534.45px;font-size:10.15px;line-height:20px;color:#303030;transform:scaleY(1.05);transform-origin:0 13.00px;">00:00:00</div>
<div class="t" style="left:674.49px;top:534.45px;font-size:10.15px;line-height:20px;color:#303030;transform:scaleY(1.05);transform-origin:0 13.00px;">00:00:01</div>
<div class="t" style="left:746.29px;top:534.45px;font-size:10.15px;line-height:20px;color:#303030;transform:scaleY(1.05);transform-origin:0 13.00px;">01:00:00</div>
<div class="t" style="left:812.09px;top:534.45px;font-size:10.15px;line-height:20px;color:#303030;transform:scaleY(1.05);transform-origin:0 13.00px;">00:00:00</div>
<div class="t" style="left:900.79px;top:534.45px;font-size:10.15px;line-height:20px;color:#303030;transform:scaleY(1.05);transform-origin:0 13.00px;">00:00:00</div>
<div class="maps" style="left:970.7px;top:532.05px"></div>
<div class="t" style="left:979.07px;top:534.45px;font-size:11.26px;line-height:20px;color:#fff;-webkit-text-stroke:0.35px #fff;">maps</div>
<svg class="abs" style="left:1046px;top:534.75px" width="8" height="16" viewBox="0 0 8 16"><g fill="#1a1a1a"><circle cx="3.55" cy="3.05" r="1.35"/><circle cx="3.55" cy="7.3" r="1.35"/><circle cx="3.55" cy="11.55" r="1.35"/></g></svg>
<div class="row" style="left:181px;top:564.50px;width:905px;height:39.75px;background:#e9e9e9"></div>
<div class="row" style="left:181px;top:564.50px;width:126px;height:39.75px;background:#f2f2f2"></div>
<div class="row" style="left:181px;top:564.50px;width:905px;height:1px;background:#e2e2e2"></div>
<div class="t" style="left:194.94px;top:574.20px;font-size:10.15px;line-height:20px;color:#303030;transform:scaleY(1.05);transform-origin:0 13.00px;">17</div>
<div class="t" style="left:235.59px;top:574.20px;font-size:10.15px;line-height:20px;color:#303030;transform:scaleY(1.05);transform-origin:0 13.00px;">32310011</div>
<div class="t" style="left:319.96px;top:574.20px;font-size:9.76px;line-height:20px;color:#303030;letter-spacing:0.00px;transform:scaleY(1.05);transform-origin:0 13.00px;">SANUDIN</div>
<div class="t" style="left:406.86px;top:574.20px;font-size:9.70px;line-height:20px;color:#303030;letter-spacing:-0.13px;transform:scaleY(1.05);transform-origin:0 13.00px;">SHIFT1</div>
<div class="t" style="left:469.49px;top:574.20px;font-size:10.15px;line-height:20px;color:#303030;transform:scaleY(1.05);transform-origin:0 13.00px;">2025-09-18</div>
<div class="t" style="left:546.79px;top:574.20px;font-size:10.08px;line-height:20px;color:#303030;transform:scaleY(1.05);transform-origin:0 13.00px;">Leave</div>
<div class="t" style="left:608.29px;top:574.20px;font-size:10.15px;line-height:20px;color:#303030;transform:scaleY(1.05);transform-origin:0 13.00px;">08:17:00</div>
<div class="t" style="left:674.14px;top:574.20px;font-size:10.15px;line-height:20px;color:#303030;transform:scaleY(1.05);transform-origin:0 13.00px;">14:17:00</div>
<div class="t" style="left:746.29px;top:574.20px;font-size:10.15px;line-height:20px;color:#303030;transform:scaleY(1.05);transform-origin:0 13.00px;">00:17:00</div>
<div class="t" style="left:812.09px;top:574.20px;font-size:10.15px;line-height:20px;color:#303030;transform:scaleY(1.05);transform-origin:0 13.00px;">00:00:00</div>
<div class="t" style="left:900.79px;top:574.20px;font-size:10.15px;line-height:20px;color:#303030;transform:scaleY(1.05);transform-origin:0 13.00px;">00:00:00</div>
<div class="maps" style="left:970.7px;top:571.80px"></div>
<div class="t" style="left:979.07px;top:574.20px;font-size:11.26px;line-height:20px;color:#fff;-webkit-text-stroke:0.35px #fff;">maps</div>
<svg class="abs" style="left:1046px;top:574.50px" width="8" height="16" viewBox="0 0 8 16"><g fill="#1a1a1a"><circle cx="3.55" cy="3.05" r="1.35"/><circle cx="3.55" cy="7.3" r="1.35"/><circle cx="3.55" cy="11.55" r="1.35"/></g></svg>
<div class="abs" style="left:179.2px;top:484px;width:778.8px;height:40.5px;border:2px solid #111"></div>
<div class="abs" style="left:1261px;top:0;width:16px;height:596px;background:#f8f8f8"></div>
<div class="abs" style="left:1264px;top:3px;width:0;height:0;border-left:5px solid transparent;border-right:5px solid transparent;border-bottom:7px solid #777"></div>
<div class="abs" style="left:1265px;top:19px;width:8px;height:408px;border-radius:4px;background:#8b8b8b"></div>
<div class="abs" style="left:1264px;top:580px;width:0;height:0;border-left:5px solid transparent;border-right:5px solid transparent;border-top:7px solid #777"></div>
<div class="abs" style="left:1277px;top:0;width:1px;height:596px;background:#e8e8e8"></div>
<div class="abs" style="left:1278px;top:0;width:2px;height:596px;background:#f6f6f6"></div>
<div class="abs" style="left:0;top:595px;width:1280px;height:1px;background:#f0f0f0"></div>
<div class="abs" style="left:0;top:596px;width:1280px;height:1px;background:#dadada"></div>
<div class="abs" style="left:0;top:597px;width:1280px;height:2px;background:#fafafa"></div>
<div class="abs" style="left:0;top:599px;width:1280px;height:1px;background:#d4d4d4"></div>
</body></html>
